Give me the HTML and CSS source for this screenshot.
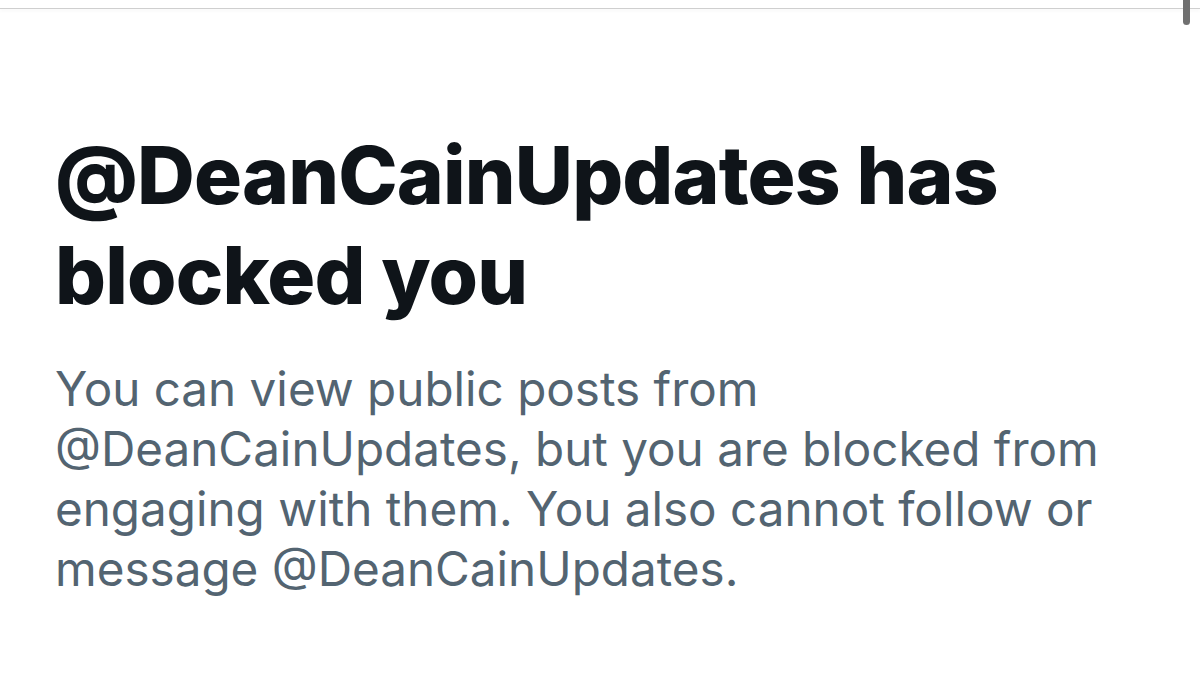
FILE: index.html
```html
<!DOCTYPE html>
<html lang="en">
<head>
<meta charset="utf-8">
<title>Blocked</title>
<link rel="stylesheet" href="styles.css">
</head>
<body>
<div class="topbar"><div class="scrollbar"></div></div>
<main class="content">
  <h1 class="title">@DeanCainUpdates has blocked you</h1>
  <p class="desc">You can view public posts from @DeanCainUpdates, but you are blocked from engaging with them. You also cannot follow or message @DeanCainUpdates.</p>
</main>
</body>
</html>
```
FILE: styles.css
```css
html, body {
  margin: 0;
  padding: 0;
  background: #ffffff;
}
body {
  width: 1200px;
  height: 696px;
  overflow: hidden;
  font-family: Inter, "Noto Sans", sans-serif;
}
.topbar {
  position: relative;
  height: 8px;
  border-bottom: 1px solid #cfcfcf;
  box-shadow: 0 3px 3px rgba(0,0,0,0.02);
}
.scrollbar {
  position: absolute;
  top: 0;
  left: 1183px;
  width: 7px;
  height: 25px;
  background: #707070;
  border-radius: 0 0 4px 4px;
}
.content {
  padding: 116px 0 0 55px;
  width: 1090px;
}
.title {
  margin: 0;
  font-size: 80px;
  font-weight: 800;
  line-height: 100px;
  letter-spacing: -0.85px;
  color: #0f1419;
}
.desc {
  margin: 34px 0 0;
  font-size: 47.6px;
  font-weight: 400;
  line-height: 60px;
  color: #536471;
}
```
